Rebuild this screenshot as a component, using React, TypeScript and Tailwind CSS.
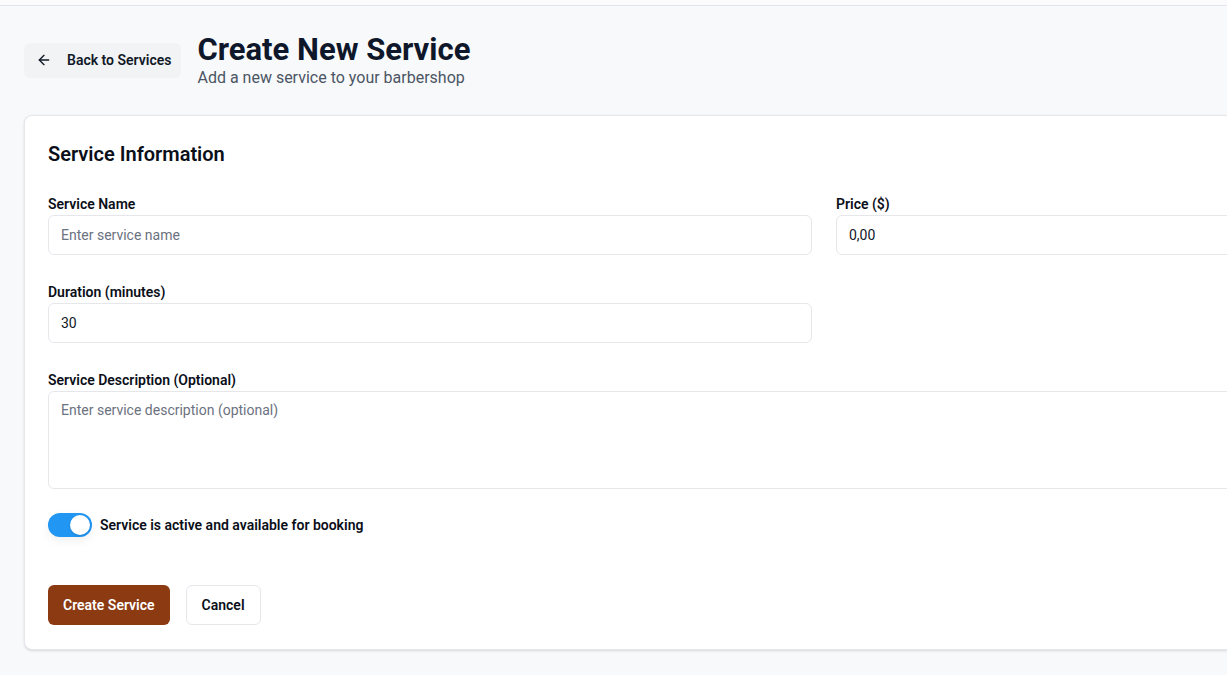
import { ArrowLeft } from "lucide-react";

const font = { fontFamily: 'Roboto, "Noto Sans", sans-serif' };

function Field({ label, children, className = "" }: { label: string; children: React.ReactNode; className?: string }) {
  return (
    <div className={className}>
      <label className="block h-5 text-sm leading-5 font-semibold text-[#0b0f19]">{label}</label>
      <div className="mt-px">{children}</div>
    </div>
  );
}

export default function App() {
  return (
    <div className="h-[675px] w-full overflow-hidden bg-[#f8f9fb]" style={font}>
      {/* top bar remains */}
      <div className="h-[6px] border-b border-[#e3e5ee] bg-[#fbfbfd]" />

      <div className="w-[1648px] px-6">
        {/* header */}
        <div className="mt-[28px] flex items-center gap-4">
          <button className="flex h-[35px] -translate-y-0.5 items-center rounded-md bg-[#f1f3f4] pl-3 pr-[10px] text-sm font-semibold text-[#111827]">
            <ArrowLeft className="h-4 w-4" strokeWidth={2} />
            <span className="ml-[15px]">Back to Services</span>
          </button>
          <div>
            <h1 className="text-[31px] leading-8 font-bold text-[#0f172a]">Create New Service</h1>
            <p className="text-base leading-6 text-[#4b5563]">Add a new service to your barbershop</p>
          </div>
        </div>

        {/* card */}
        <div className="mt-[25px] rounded-lg border border-[#e5e7eb] bg-white px-[23px] pt-6 pb-6 shadow-sm">
          <h2 className="text-xl leading-7 font-semibold text-[#0b0f19]">Service Information</h2>

          <div className="mt-[26px] grid grid-cols-2 gap-x-6">
            <Field label="Service Name">
              <input
                placeholder="Enter service name"
                className="h-10 w-full rounded-md border border-[#e5e7eb] px-3 text-sm text-[#111827] placeholder:text-[#6b7280] outline-none"
              />
            </Field>
            <Field label="Price ($)">
              <input
                defaultValue="0,00"
                className="h-10 w-full rounded-md border border-[#e5e7eb] px-3 text-sm text-[#111827] outline-none"
              />
            </Field>
            <Field label="Duration (minutes)" className="mt-[27px]">
              <input
                defaultValue="30"
                className="h-10 w-full rounded-md border border-[#e5e7eb] px-3 text-sm text-[#111827] outline-none"
              />
            </Field>
          </div>

          <Field label="Service Description (Optional)" className="mt-[27px]">
            <textarea
              placeholder="Enter service description (optional)"
              className="block h-[98px] w-full resize-none rounded-md border border-[#e5e7eb] px-3 py-2 text-sm text-[#111827] placeholder:text-[#6b7280] outline-none"
            />
          </Field>

          <div className="mt-6 flex items-center gap-2">
            <div className="flex h-6 w-11 items-center rounded-full bg-[#2196f3] p-[2px] shadow-[0_4px_10px_rgba(0,0,0,0.06)]">
              <div className="ml-auto h-5 w-5 rounded-full bg-white shadow" />
            </div>
            <span className="text-sm font-semibold text-[#0b0f19]">Service is active and available for booking</span>
          </div>

          <div className="mt-12 flex gap-4">
            <button className="h-10 rounded-md bg-[#8b3a12] px-[15px] text-sm font-semibold text-white">Create Service</button>
            <button className="h-10 rounded-md border border-[#e5e7eb] bg-white px-[15px] text-sm font-semibold text-[#0b0f19]">Cancel</button>
          </div>
        </div>
      </div>
    </div>
  );
}
